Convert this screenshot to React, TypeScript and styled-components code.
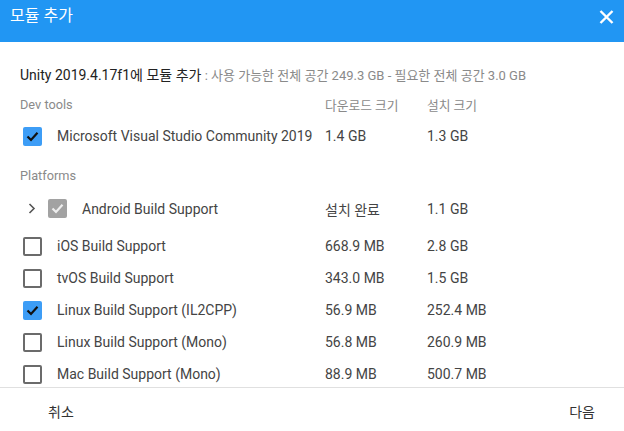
import React from "react";
import styled, { createGlobalStyle } from "styled-components";

const Global = createGlobalStyle`
  html, body { margin: 0; padding: 0; background: #fff; }
  body { font-family: Roboto, "Noto Sans CJK KR", "Noto Sans", sans-serif; -webkit-font-smoothing: antialiased; }
  * { box-sizing: border-box; }
`;

const Dialog = styled.div`
  width: 624px;
  height: 431px;
  display: flex;
  flex-direction: column;
  background: #fff;
  overflow: hidden;
`;

const Header = styled.header`
  height: 42px;
  flex: 0 0 42px;
  background: #2196f3;
  display: flex;
  align-items: flex-start;
  justify-content: space-between;
  padding: 5px 10px 0 10px;
`;

const Title = styled.h1`
  margin: 0;
  font-size: 16px;
  line-height: 22px;
  font-weight: 400;
  color: #fff;
`;

const CloseButton = styled.button`
  border: 0;
  background: transparent;
  padding: 0;
  margin-top: 4px;
  width: 16px;
  height: 16px;
  display: flex;
  align-items: center;
  justify-content: center;
  cursor: pointer;
`;

const Content = styled.div`
  flex: 1 1 auto;
  overflow: hidden;
  padding: 24px 20px 0 20px;
`;

const Intro = styled.div`
  font-size: 14px;
  line-height: 18px;
  color: #222;
  white-space: nowrap;
`;

const IntroNote = styled.span`
  font-size: 13px;
  color: #8a8a8a;
`;

const Grid = styled.div`
  display: grid;
  grid-template-columns: 305px 102px 1fr;
  align-items: center;
`;

const GroupRow = styled(Grid)<{ $top: number }>`
  height: 16px;
  margin-top: ${(p) => p.$top}px;
  font-size: 12.75px;
  color: #8a8a8a;
`;

const Row = styled(Grid)<{ $h?: number; $top?: number }>`
  height: ${(p) => p.$h ?? 32}px;
  margin-top: ${(p) => p.$top ?? 0}px;
  font-size: 14px;
  color: #444;
`;

const NameCell = styled.div<{ $indent?: boolean }>`
  display: flex;
  align-items: center;
  padding-left: ${(p) => (p.$indent ? 8 : 3)}px;
  white-space: nowrap;
`;

const Chevron = styled.span`
  width: 20px;
  display: flex;
  align-items: center;
`;

const Box = styled.span<{ $state: "on" | "off" | "done" }>`
  width: 19px;
  height: 19px;
  flex: 0 0 19px;
  border-radius: 2px;
  margin-right: 15px;
  display: flex;
  align-items: center;
  justify-content: center;
  background: ${(p) =>
    p.$state === "on" ? "#3d9df6" : p.$state === "done" ? "#a2a2a2" : "#fff"};
  border: ${(p) => (p.$state === "off" ? "2px solid #6b6b6b" : "none")};
`;

const Footer = styled.footer`
  flex: 0 0 44px;
  height: 44px;
  border-top: 1px solid #e0e0e0;
  display: flex;
  align-items: center;
  justify-content: space-between;
  padding: 3px 29px 0 48px;
`;

const FooterButton = styled.button`
  border: 0;
  background: transparent;
  padding: 0;
  font-family: inherit;
  font-size: 14px;
  color: #333;
  cursor: pointer;
`;

const Check = ({ color }: { color: string }) => (
  <svg width="13" height="11" viewBox="0 0 13 11">
    <path d="M1.5 5.5 L5 9 L11.5 1.8" fill="none" stroke={color} strokeWidth="2.2" />
  </svg>
);

type Item = {
  name: string;
  dl: string;
  inst: string;
  state: "on" | "off" | "done";
};

const platforms: Item[] = [
  { name: "iOS Build Support", dl: "668.9 MB", inst: "2.8 GB", state: "off" },
  { name: "tvOS Build Support", dl: "343.0 MB", inst: "1.5 GB", state: "off" },
  { name: "Linux Build Support (IL2CPP)", dl: "56.9 MB", inst: "252.4 MB", state: "on" },
  { name: "Linux Build Support (Mono)", dl: "56.8 MB", inst: "260.9 MB", state: "off" },
  { name: "Mac Build Support (Mono)", dl: "88.9 MB", inst: "500.7 MB", state: "off" },
];

const CheckBox = ({ state }: { state: Item["state"] }) => (
  <Box $state={state}>
    {state === "on" && <Check color="#111" />}
    {state === "done" && <Check color="#eee" />}
  </Box>
);

export default function App() {
  return (
    <>
      <Global />
      <Dialog>
        <Header>
          <Title>모듈 추가</Title>
          <CloseButton aria-label="close">
            <svg width="15" height="14" viewBox="0 0 15 14">
              <path d="M1.5 1 L13.5 13 M13.5 1 L1.5 13" stroke="#fff" strokeWidth="2.4" />
            </svg>
          </CloseButton>
        </Header>
        <Content>
          <Intro>
            Unity 2019.4.17f1에 모듈 추가
            <IntroNote> : 사용 가능한 전체 공간 249.3 GB - 필요한 전체 공간 3.0 GB</IntroNote>
          </Intro>
          <GroupRow $top={10}>
            <span>Dev tools</span>
            <span>다운로드 크기</span>
            <span>설치 크기</span>
          </GroupRow>
          <Row $top={9}>
            <NameCell>
              <CheckBox state="on" />
              Microsoft Visual Studio Community 2019
            </NameCell>
            <span>1.4 GB</span>
            <span>1.3 GB</span>
          </Row>
          <GroupRow $top={15}>
            <span>Platforms</span>
          </GroupRow>
          <Row $h={43} $top={4}>
            <NameCell $indent>
              <Chevron>
                <svg width="8" height="11" viewBox="0 0 8 11">
                  <path d="M1.5 1 L6 5.5 L1.5 10" fill="none" stroke="#555" strokeWidth="1.6" />
                </svg>
              </Chevron>
              <CheckBox state="done" />
              Android Build Support
            </NameCell>
            <span>설치 완료</span>
            <span>1.1 GB</span>
          </Row>
          {platforms.map((p) => (
            <Row key={p.name}>
              <NameCell>
                <CheckBox state={p.state} />
                {p.name}
              </NameCell>
              <span>{p.dl}</span>
              <span>{p.inst}</span>
            </Row>
          ))}
        </Content>
        <Footer>
          <FooterButton>취소</FooterButton>
          <FooterButton>다음</FooterButton>
        </Footer>
      </Dialog>
    </>
  );
}
